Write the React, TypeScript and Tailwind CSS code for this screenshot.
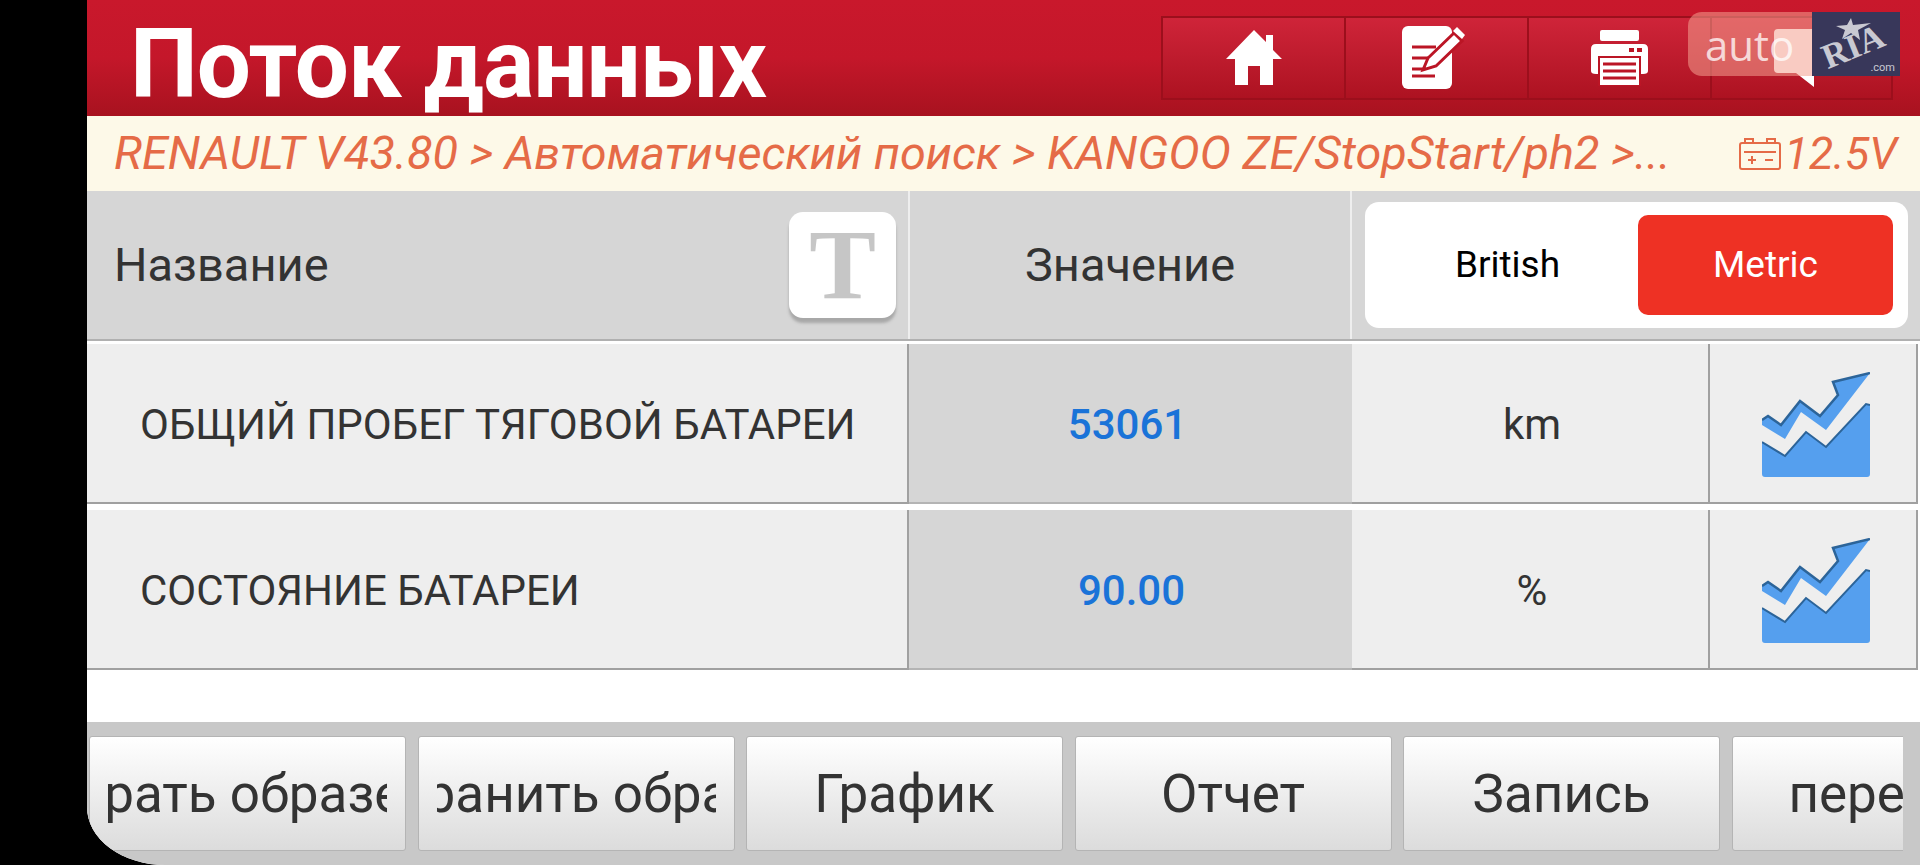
const ROBOTO = "font-['Roboto',sans-serif]";

const HomeIcon = () => (
  <svg width="56" height="56" viewBox="0 0 56 56" fill="#fff">
    <path d="M28 0 L40 12 V5 H47 V20 L56 29 L47 29 L47 55 L34 55 L34 36 L22 36 L22 55 L9 55 L9 29 L0 29 Z" />
  </svg>
);

const NoteIcon = () => (
  <svg width="64" height="64" viewBox="0 0 64 64">
    <rect x="0" y="0" width="50" height="63" rx="6" fill="#fff" />
    <path d="M10 21H34M10 32H27M10 43H21M10 50H33" stroke="#bb1525" strokeWidth="3" fill="none" />
    <path d="M21 44 L26 32 L52 7 L60 15 L34 40 Z" fill="#fff" stroke="#bb1525" strokeWidth="3" />
    <path d="M55 1 L63 9 L60 13 L51 5 Z" fill="#fff" />
  </svg>
);

const PrinterIcon = () => (
  <svg width="57" height="56" viewBox="0 0 57 56">
    <rect x="9" y="0" width="39" height="11" rx="2" fill="#fff" />
    <path d="M5 14H52Q57 14 57 19V41Q57 44 52 44H5Q0 44 0 41V19Q0 14 5 14Z" fill="#fff" />
    <rect x="38" y="18" width="5" height="4" fill="#bb1525" />
    <rect x="46" y="18" width="5" height="4" fill="#bb1525" />
    <rect x="8" y="27" width="41" height="29" fill="#fff" stroke="#bb1525" strokeWidth="2" />
    <path d="M12 34H45M12 41H45M12 48H45" stroke="#bb1525" strokeWidth="3" />
  </svg>
);

const BubbleIcon = () => (
  <svg width="56" height="58" viewBox="0 0 56 58" fill="#fff">
    <path d="M4 0H52Q56 0 56 4V40Q56 44 52 44H40L40 58L22 44H4Q0 44 0 40V4Q0 0 4 0Z" />
  </svg>
);

const BatteryIcon = () => (
  <svg width="42" height="32" viewBox="0 0 42 32" fill="none" stroke="#e56b47" strokeWidth="2">
    <rect x="1" y="5" width="40" height="26" rx="2" />
    <path d="M6 5V1H14V5M28 5V1H36V5M5 14H37M9 22H17M13 18V26M26 22H34" />
  </svg>
);

const ChartIcon = () => (
  <svg width="108" height="106" viewBox="0 0 108 106">
    <path d="M0 70 L23 84 L44 60 L64 75 L104 32 L108 33 V102 Q108 105 105 105 H3 Q0 105 0 102 Z" fill="#559fee" />
    <path d="M0 70 L23 84 L44 60 L64 75 L104 32 L108 33" fill="none" stroke="#2c6499" strokeWidth="2" />
    <path d="M0 48 L6 44 L19 53 L38 29 L58 44 L76 23 L71 10 L108 1 L64 58 L39 40 L23 67 L0 53 Z" fill="#559fee" />
    <path d="M0 48 L6 44 L19 53 L38 29 L58 44 L76 23 L71 10 L108 1" fill="none" stroke="#2c6499" strokeWidth="2.5" />
  </svg>
);

const ToolButton = ({children, last = false}: {children: React.ReactNode; last?: boolean}) => (
  <div
    className={`flex h-full w-[183px] items-center justify-center border-[#9c0f1c] border-y-2 border-l-2 bg-gradient-to-b from-[#cf2439] to-[#ad1221] ${last ? "border-r-2" : ""}`}
  >
    {children}
  </div>
);

const DataRow = ({name, value, unit, valueClass}: {name: string; value: string; unit: string; valueClass: string}) => (
  <div className="grid h-[160px] grid-cols-[822px_443px_358px_208px] text-[#333]">
    <div className="flex items-center border-r-2 border-b-2 border-[#a0a0a0] bg-[#eeeeee] pt-[3px] pl-[53px] text-[42px]">
      {name}
    </div>
    <div
      className={`flex items-center justify-center border-b-2 border-[#b4b4b4] bg-[#d6d6d6] pt-[3px] text-[42px] font-medium text-[#1a73d8] ${valueClass}`}
    >
      {value}
    </div>
    <div className="flex items-center justify-center border-r-2 border-b-2 border-[#a0a0a0] bg-[#eeeeee] pt-[3px] pl-[4px] text-[42px]">
      {unit}
    </div>
    <div className="flex items-center justify-center border-r-2 border-b-2 border-[#a0a0a0] bg-[#eeeeee] pt-[3px] pl-[6px]">
      <ChartIcon />
    </div>
  </div>
);

const BottomButton = ({label, labelClass = ""}: {label: string; labelClass?: string}) => (
  <div className="flex h-[115px] w-[317px] shrink-0 items-center justify-center rounded-[3px] border border-[#b4b4b4] bg-gradient-to-b from-white to-[#dcdcdc] px-[18px] pt-[3px]">
    <div className="flex w-full justify-center overflow-hidden">
      <span className={`shrink-0 text-[53px] whitespace-nowrap text-[#333] ${labelClass}`}>{label}</span>
    </div>
  </div>
);

export default function App() {
  return (
    <div className={`relative flex h-[865px] w-[1920px] overflow-hidden bg-black pl-[87px] ${ROBOTO}`}>
      <div className="flex h-full w-full flex-col overflow-hidden rounded-bl-[78px_58px] bg-white">
        {/* title bar */}
        <div className="flex h-[116px] shrink-0 items-start justify-between overflow-hidden bg-gradient-to-b from-[#c9182c] via-[#c4172a] to-[#a8121f] pr-[27px] pl-[43px]">
          <h1 className="mt-[8px] text-[96px] leading-[112px] font-bold tracking-[-1.1px] text-white">Поток данных</h1>
          <div className="mt-[16px] flex h-[84px]">
            <ToolButton>
              <HomeIcon />
            </ToolButton>
            <ToolButton>
              <div className="pr-[6px]">
                <NoteIcon />
              </div>
            </ToolButton>
            <ToolButton>
              <PrinterIcon />
            </ToolButton>
            <ToolButton last>
              <BubbleIcon />
            </ToolButton>
          </div>
        </div>

        {/* breadcrumb */}
        <div className="flex h-[75px] shrink-0 items-center justify-between bg-[#fdf9e8] pr-[23px] pl-[27px] text-[#e56b47] italic">
          <span className="text-[46.8px] whitespace-nowrap">
            RENAULT V43.80 &gt; Автоматический поиск &gt; KANGOO ZE/StopStart/ph2 &gt;...
          </span>
          <div className="flex items-center gap-[3px]">
            <BatteryIcon />
            <span className="text-[45px]">12.5V</span>
          </div>
        </div>

        {/* table head */}
        <div className="grid h-[150px] shrink-0 grid-cols-[823px_442px_1fr] border-b-2 border-[#b0b0b0] bg-[#d6d6d6] text-[#333]">
          <div className="flex items-center justify-between border-r-2 border-[#eeeeee] pr-[12px] pl-[27px]">
            <span className="text-[47px]">Название</span>
            <div className="flex h-[106px] w-[107px] items-center justify-center rounded-[14px] bg-white shadow-[0_5px_3px_#a8a8a8]">
              <span className="font-['Liberation_Serif',serif] text-[100px] leading-none font-bold text-[#c6c6c6]">T</span>
            </div>
          </div>
          <div className="flex items-center justify-center border-r-2 border-[#eeeeee] text-[47px]">
            Значение
          </div>
          <div className="flex items-center pl-[13px]">
            <div className="flex h-[126px] w-[543px] items-center justify-between rounded-[14px] bg-white pr-[15px]">
              <span className="w-[273px] pl-[12px] text-center text-[37px] text-black">British</span>
              <div className="flex h-[100px] w-[255px] items-center justify-center rounded-[10px] bg-[#ee3124] text-[37px] text-white">
                Metric
              </div>
            </div>
          </div>
        </div>

        {/* rows */}
        <div className="flex shrink-0 flex-col gap-[6px] pt-[3px]">
          <DataRow name="ОБЩИЙ ПРОБЕГ ТЯГОВОЙ БАТАРЕИ" value="53061" unit="km" valueClass="pr-[6px]" />
          <DataRow name="СОСТОЯНИЕ БАТАРЕИ" value="90.00" unit="%" valueClass="pl-[2px]" />
        </div>

        {/* bottom actions */}
        <div className="mt-[52px] flex min-h-0 flex-1 gap-[11.5px] overflow-hidden border-r-[17px] border-[#c8c8c8] bg-[#c8c8c8] pt-[14px] pl-[2px]">
          <BottomButton label="Выбрать образец" labelClass="pr-[60px]" />
          <BottomButton label="Сохранить образец" />
          <BottomButton label="График" />
          <BottomButton label="Отчет" />
          <BottomButton label="Запись" />
          <BottomButton label="перевод" labelClass="pl-[4px]" />
        </div>
      </div>

      {/* auto.ria watermark */}
      <div className="absolute top-[12px] left-[1688px] flex h-[64px]">
        <div className="flex w-[124px] items-center rounded-l-[14px] bg-[#f4a090]/55 pl-[17px]">
          <span className="font-['Open_Sans',sans-serif] text-[42px] font-medium text-white/75">auto</span>
        </div>
        <div className="relative w-[88px] overflow-hidden bg-[#38375a]">
          <svg className="absolute top-[6px] left-[24px]" width="36" height="24" viewBox="0 0 36 24" fill="#c9c9d2">
            <path d="M15 0 L17 7 L35 5 L22 12 L24 22 L15 15 L6 21 L9 12 L0 8 L11 7 Z" />
          </svg>
          <span className="absolute top-[17px] left-[9px] -rotate-[22deg] font-['Liberation_Serif',serif] text-[35px] leading-none font-bold text-[#c9c9d2]">
            RIA
          </span>
          <span className="absolute right-[5px] bottom-[3px] text-[11px] leading-none text-[#c9c9d2]">.com</span>
        </div>
      </div>
    </div>
  );
}
